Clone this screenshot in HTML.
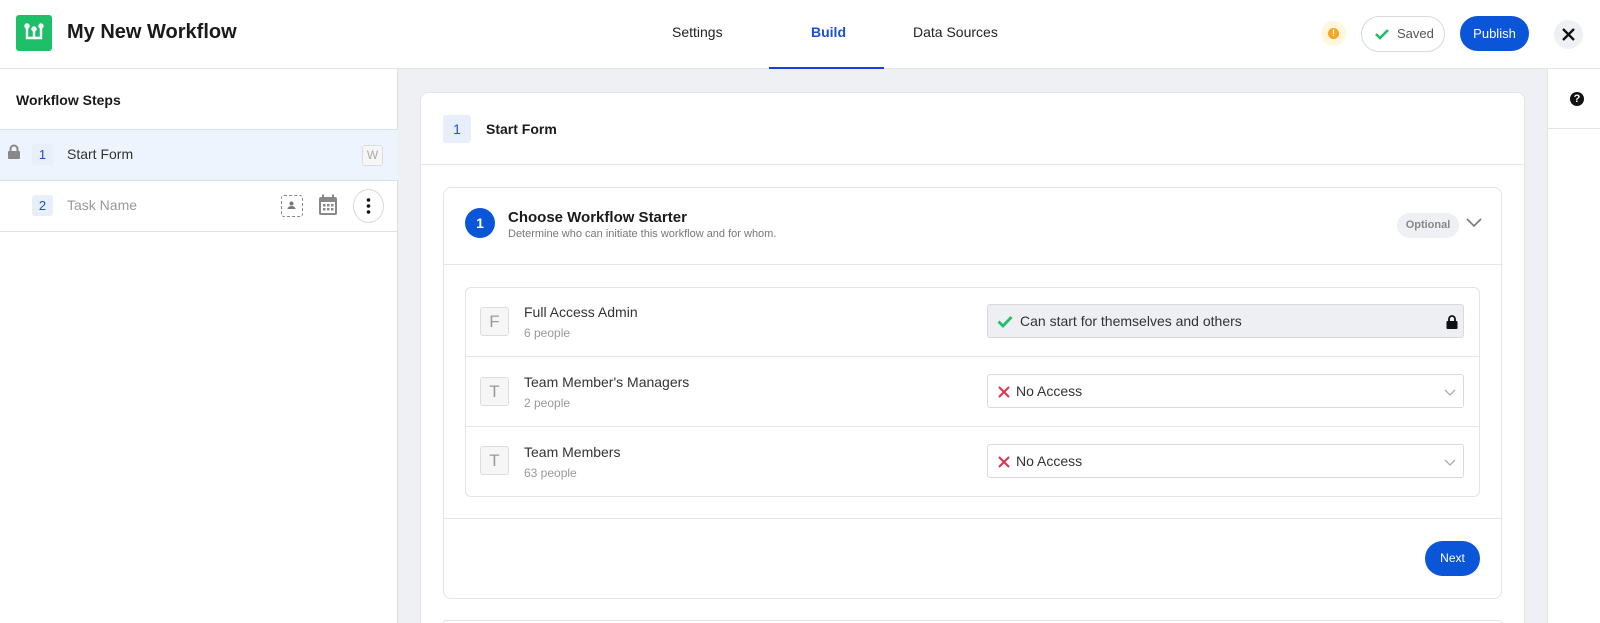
<!DOCTYPE html>
<html style="overflow:hidden;height:623px"><head><meta charset="utf-8"><style>
*{box-sizing:border-box;margin:0;padding:0}
body{width:1600px;height:623px;overflow:hidden;font-family:"Liberation Sans",sans-serif;background:#eef0f4;position:relative;color:#1a1a1a}
.abs{position:absolute}
.hdr{left:0;top:0;width:1600px;height:69px;background:#fff;border-bottom:1px solid #e2e4e8}
.tab{top:24px;font-size:14px;font-weight:500;color:#222}
.left{left:0;top:69px;width:398px;height:554px;background:#fff;border-right:1px solid #dcdfe4}
.badge{width:21px;height:21px;background:#e8eefa;color:#1a4fd8;font-size:13px;text-align:center;line-height:21px;border-radius:3px}
.card{background:#fff;border:1px solid #e2e4e8;border-radius:8px}
.lt{width:29px;height:29px;border:1px solid #ddd;background:#f6f6f6;border-radius:3px;color:#999;font-size:17px;text-align:center;line-height:27px}
.nm{font-size:14px;color:#333}
.sub{font-size:12px;color:#999}
.dd{border:1px solid #d8dadf;border-radius:3px;height:34px;background:#fff;font-size:14px;color:#333;line-height:32px}
</style></head><body>
<div class="abs hdr"></div>
<div class="abs" style="left:16px;top:15px;width:36px;height:36px;background:#1dbf68;border-radius:3px">
<svg width="36" height="36" viewBox="0 0 36 36"><g fill="none" stroke="#fff" stroke-width="2.4"><path d="M11 12v11h14V12M18 15v8"/><circle cx="11" cy="11" r="1.5"/><circle cx="25" cy="11" r="1.5"/><circle cx="18" cy="14" r="1.5"/></g></svg></div>
<div class="abs" style="left:67px;top:21px;font-size:20px;font-weight:700;color:#1a1a1a">My New Workflow</div>
<div class="abs tab" style="left:672px">Settings</div>
<div class="abs tab" style="left:811px;color:#1a4fd8;font-weight:700">Build</div>
<div class="abs tab" style="left:913px">Data Sources</div>
<div class="abs" style="left:769px;top:67px;width:115px;height:2px;background:#1a3fe0"></div>
<div class="abs" style="left:1321px;top:21px;width:25px;height:25px;border-radius:50%;background:#fff6dc"><div style="margin:7px auto;width:11px;height:11px;border-radius:50%;background:#f5a623;color:#fff;font-size:9px;font-weight:700;text-align:center;line-height:11px">!</div></div>
<div class="abs" style="left:1361px;top:16px;width:84px;height:36px;border:1px solid #d8dadf;border-radius:18px;font-size:13px;color:#555;line-height:34px;padding-left:35px"><svg class="abs" style="left:13px;top:11px" width="14" height="12" viewBox="0 0 14 12"><path d="M1 6l4 4 8-8" fill="none" stroke="#1dbf68" stroke-width="2.6"/></svg>Saved</div>
<div class="abs" style="left:1460px;top:16px;width:69px;height:35px;border-radius:18px;background:#0b55d9;color:#fff;font-size:13px;text-align:center;line-height:35px">Publish</div>
<div class="abs" style="left:1554px;top:20px;width:29px;height:29px;border-radius:50%;background:#eef0f4"><svg width="29" height="29"><path d="M9 9l11 11M20 9L9 20" stroke="#111" stroke-width="2.3"/></svg></div>

<div class="abs left"></div>
<div class="abs" style="left:16px;top:92px;font-size:14px;font-weight:700">Workflow Steps</div>
<div class="abs" style="left:0;top:129px;width:398px;height:52px;background:#edf4fe;border-top:1px solid #d5e3f5;border-bottom:1px solid #cfe0f7"></div>
<svg class="abs" style="left:7px;top:144px" width="14" height="15"><path d="M3.5 7V5a3.5 3.5 0 017 0v2" fill="none" stroke="#888" stroke-width="2"/><rect x="1" y="7" width="12" height="8" rx="1" fill="#888"/></svg>
<div class="abs badge" style="left:32px;top:144px">1</div>
<div class="abs" style="left:67px;top:146px;font-size:14px;color:#333">Start Form</div>
<div class="abs" style="left:362px;top:145px;width:21px;height:21px;border:1px solid #ddd;border-radius:3px;background:#f6f6f6;color:#aaa;font-size:12px;text-align:center;line-height:19px">W</div>
<div class="abs" style="left:0;top:231px;width:398px;height:1px;background:#dcdfe4"></div>
<div class="abs badge" style="left:32px;top:195px">2</div>
<div class="abs" style="left:67px;top:197px;font-size:14px;color:#999">Task Name</div>
<div class="abs" style="left:281px;top:195px;width:22px;height:22px;border:1.5px dashed #888;border-radius:3px"><svg width="19" height="19"><circle cx="9.5" cy="7.5" r="2" fill="#777"/><path d="M5.5 13a4 3 0 018 0z" fill="#777"/></svg></div>
<svg class="abs" style="left:318px;top:194px" width="20" height="22"><rect x="1" y="3" width="18" height="18" rx="2" fill="#888"/><rect x="4" y="0.5" width="2" height="5" fill="#888"/><rect x="14" y="0.5" width="2" height="5" fill="#888"/><rect x="3" y="8" width="14" height="11" fill="#fff"/><g fill="#888"><rect x="5" y="10" width="2.5" height="2.5"/><rect x="9" y="10" width="2.5" height="2.5"/><rect x="13" y="10" width="2.5" height="2.5"/><rect x="5" y="14" width="2.5" height="2.5"/><rect x="9" y="14" width="2.5" height="2.5"/><rect x="13" y="14" width="2.5" height="2.5"/></g></svg>
<div class="abs" style="left:353px;top:189px;width:31px;height:34px;border:1px solid #d8dadf;border-radius:50%"><svg width="29" height="32"><g fill="#111"><circle cx="14.5" cy="10" r="1.8"/><circle cx="14.5" cy="16" r="1.8"/><circle cx="14.5" cy="22" r="1.8"/></g></svg></div>

<div class="abs" style="left:1547px;top:69px;width:53px;height:554px;background:#fff;border-left:1px solid #e2e4e8"></div>
<div class="abs" style="left:1547px;top:128px;width:53px;height:1px;background:#e2e4e8"></div>
<div class="abs" style="left:1570px;top:92px;width:14px;height:14px;border-radius:50%;background:#111;color:#fff;font-size:11px;font-weight:700;text-align:center;line-height:14px">?</div>

<div class="abs card" style="left:420px;top:92px;width:1105px;height:531px;border-bottom:none;border-radius:8px 8px 0 0"></div>
<div class="abs badge" style="left:443px;top:115px;width:28px;height:28px;line-height:28px;font-size:14px">1</div>
<div class="abs" style="left:486px;top:121px;font-size:14px;font-weight:700">Start Form</div>
<div class="abs" style="left:421px;top:164px;width:1103px;height:1px;background:#e4e6ea"></div>

<div class="abs card" style="left:443px;top:187px;width:1059px;height:412px"></div>
<div class="abs" style="left:465px;top:208px;width:30px;height:30px;border-radius:50%;background:#0b55d9;color:#fff;font-size:14px;font-weight:700;text-align:center;line-height:30px">1</div>
<div class="abs" style="left:508px;top:209px;font-size:15px;font-weight:700">Choose Workflow Starter</div>
<div class="abs" style="left:508px;top:228px;font-size:11px;color:#777">Determine who can initiate this workflow and for whom.</div>
<div class="abs" style="left:1397px;top:213px;width:62px;height:25px;border-radius:13px;background:#eef0f3;color:#888;font-size:11px;font-weight:600;text-align:center;line-height:25px">Optional</div>
<svg class="abs" style="left:1466px;top:218px" width="16" height="10"><path d="M1 1l7 7 7-7" fill="none" stroke="#777" stroke-width="1.6"/></svg>
<div class="abs" style="left:444px;top:264px;width:1057px;height:1px;background:#e4e6ea"></div>

<div class="abs card" style="left:465px;top:287px;width:1015px;height:210px;border-radius:6px"></div>
<div class="abs" style="left:466px;top:356px;width:1013px;height:1px;background:#e4e6ea"></div>
<div class="abs" style="left:466px;top:426px;width:1013px;height:1px;background:#e4e6ea"></div>

<div class="abs lt" style="left:480px;top:307px">F</div>
<div class="abs nm" style="left:524px;top:304px">Full Access Admin</div>
<div class="abs sub" style="left:524px;top:326px">6 people</div>
<div class="abs dd" style="left:987px;top:304px;width:477px;background:#eeeff2;padding-left:32px"><svg class="abs" style="left:9px;top:10px" width="16" height="13"><path d="M1.5 6.5l4.5 4.5 8.5-9" fill="none" stroke="#1dbf68" stroke-width="2.8"/></svg>Can start for themselves and others<svg class="abs" style="left:458px;top:9px" width="12" height="15"><path d="M3 7V5a3 3 0 016 0v2" fill="none" stroke="#111" stroke-width="1.8"/><rect x="0.5" y="7" width="11" height="8" rx="1" fill="#111"/></svg></div>

<div class="abs lt" style="left:480px;top:377px">T</div>
<div class="abs nm" style="left:524px;top:374px">Team Member's Managers</div>
<div class="abs sub" style="left:524px;top:396px">2 people</div>
<div class="abs dd" style="left:987px;top:374px;width:477px;padding-left:28px"><svg class="abs" style="left:10px;top:11px" width="12" height="12"><path d="M1 1l10 10M11 1L1 11" stroke="#e0334d" stroke-width="2"/></svg>No Access<svg class="abs" style="left:456px;top:14px" width="12" height="7"><path d="M1 1l5 5 5-5" fill="none" stroke="#aaa" stroke-width="1.3"/></svg></div>

<div class="abs lt" style="left:480px;top:446px">T</div>
<div class="abs nm" style="left:524px;top:444px">Team Members</div>
<div class="abs sub" style="left:524px;top:466px">63 people</div>
<div class="abs dd" style="left:987px;top:444px;width:477px;padding-left:28px"><svg class="abs" style="left:10px;top:11px" width="12" height="12"><path d="M1 1l10 10M11 1L1 11" stroke="#e0334d" stroke-width="2"/></svg>No Access<svg class="abs" style="left:456px;top:14px" width="12" height="7"><path d="M1 1l5 5 5-5" fill="none" stroke="#aaa" stroke-width="1.3"/></svg></div>

<div class="abs" style="left:444px;top:518px;width:1057px;height:1px;background:#e4e6ea"></div>
<div class="abs" style="left:1425px;top:541px;width:55px;height:35px;border-radius:18px;background:#0b55d9;color:#fff;font-size:12px;text-align:center;line-height:35px">Next</div>
<div class="abs" style="left:443px;top:620px;width:1059px;height:3px;border:1px solid #e2e4e8;border-bottom:none;border-radius:6px 6px 0 0;background:#fff"></div>
</body></html>
